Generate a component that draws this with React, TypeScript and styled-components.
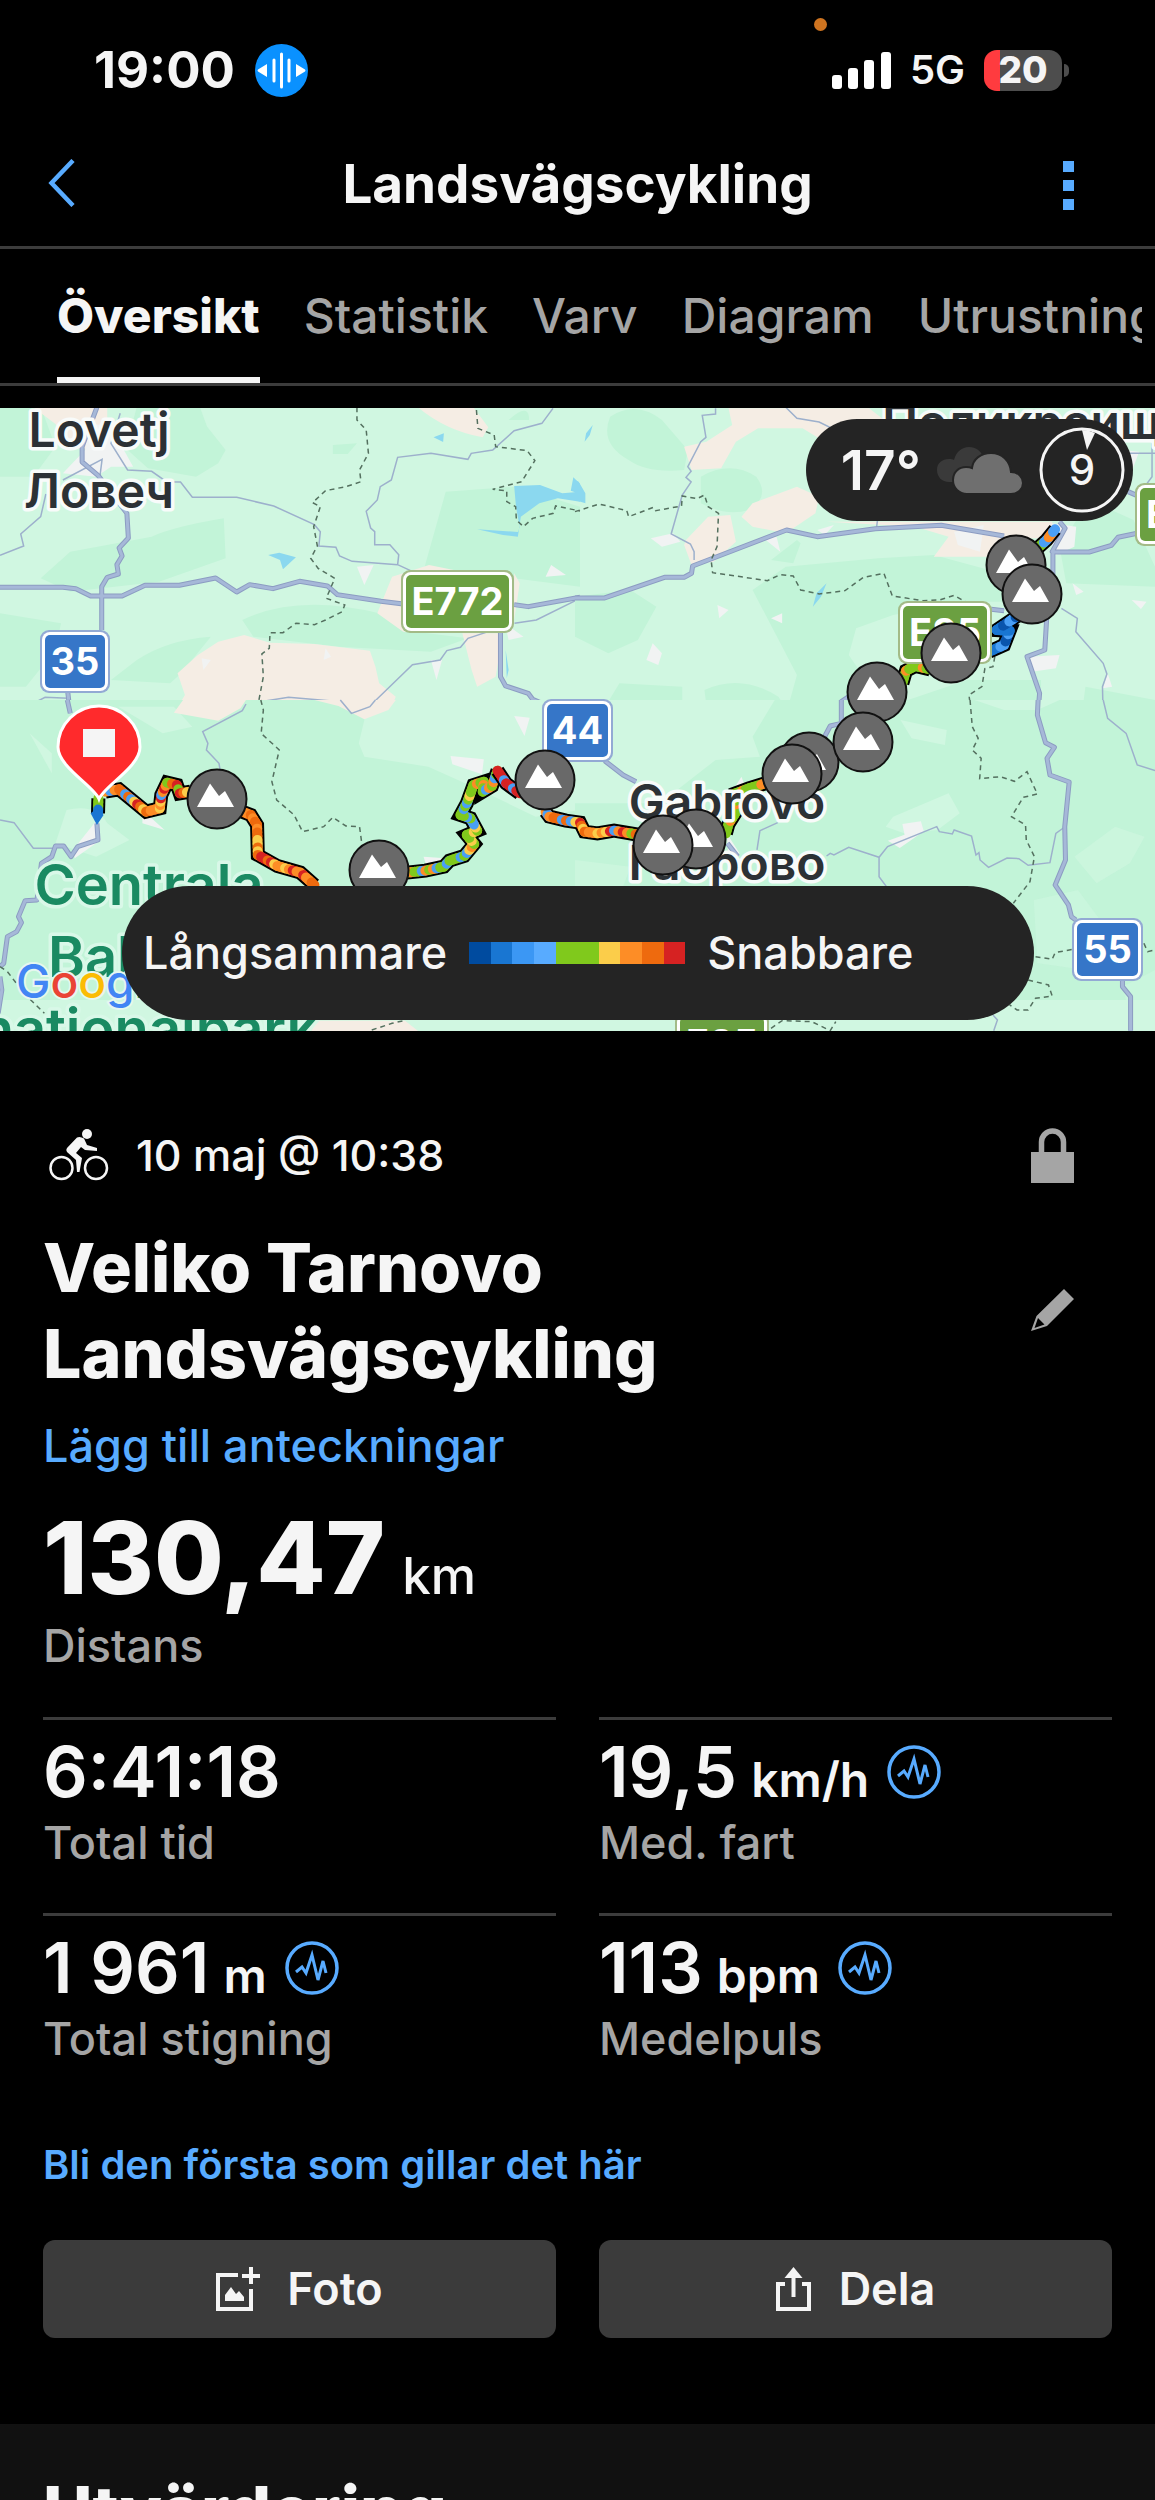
import React from "react";
import styled, { createGlobalStyle } from "styled-components";

const color = {
  bg: "#000000",
  text: "#f5f5f5",
  muted: "#a5a5a5",
  link: "#58abff",
  line: "#3c3c3c",
  button: "#3b3b3b",
  panel: "#242424",
  section: "#111111",
};

const GlobalStyle = createGlobalStyle`
  * { box-sizing: border-box; }
  body {
    margin: 0;
    background: ${color.bg};
    color: ${color.text};
    font-family: Inter, "Liberation Sans", sans-serif;
  }
  h1, h2, p, dl, dd, dt { margin: 0; font-weight: inherit; }
  button { font: inherit; color: inherit; border: 0; padding: 0; background: none; cursor: pointer; }
  a { text-decoration: none; }
  svg { display: block; flex: none; }
`;

const Screen = styled.div`
  min-height: 100vh;
  overflow: hidden;
`;

/* ---------- Status bar ---------- */

const StatusBar = styled.div`
  display: flex;
  justify-content: space-between;
  align-items: center;
  position: relative;
  height: 140px;
  padding: 0 86px 0 94px;
`;

const StatusGroup = styled.div<{ $gap: number }>`
  display: flex;
  align-items: center;
  gap: ${(p) => p.$gap}px;
`;

const Clock = styled.span`
  font-size: 51px;
  line-height: 56px;
  font-weight: 700;
`;

const Network = styled.span`
  font-size: 40px;
  line-height: 48px;
  font-weight: 600;
`;

const PrivacyDot = styled.span`
  position: absolute;
  top: 18px;
  right: 328px;
  width: 13px;
  height: 13px;
  border-radius: 50%;
  background: #cf7420;
`;

const BatteryWrap = styled.div`
  display: flex;
  align-items: center;
  gap: 2px;
`;

const BatteryBody = styled.div`
  width: 78px;
  height: 41px;
  border-radius: 13px;
  background: linear-gradient(90deg, #ff3b3f 16px, #4d4d4d 16px);
  text-align: center;
  font-size: 37px;
  line-height: 40px;
  font-weight: 800;
`;

const BatteryTip = styled.div`
  width: 5px;
  height: 13px;
  border-radius: 0 5px 5px 0;
  background: #4d4d4d;
`;

/* ---------- Header and tabs ---------- */

const Header = styled.header`
  display: grid;
  grid-template-columns: 120px 1fr 120px;
  align-items: center;
  height: 109px;
  padding-bottom: 18px;
  border-bottom: 3px solid ${color.line};
`;

const HeaderButton = styled.button<{ $end?: boolean }>`
  display: flex;
  justify-content: ${(p) => (p.$end ? "flex-end" : "flex-start")};
  padding: ${(p) => (p.$end ? "2px 81px 0 0" : "0 0 2px 46px")};
`;

const ScreenTitle = styled.h1`
  text-align: center;
  font-size: 53px;
  line-height: 64px;
  font-weight: 700;
`;

const Tabs = styled.nav`
  display: flex;
  height: 137px;
  margin-bottom: 22px;
  padding: 0 13px 0 57px;
  border-bottom: 3px solid ${color.line};
`;

const TabStrip = styled.div`
  display: flex;
  gap: 44px;
  flex: 1;
  min-width: 0;
  overflow: hidden;
`;

const Tab = styled.button<{ $active?: boolean }>`
  flex: none;
  height: 134px;
  font-size: 48px;
  line-height: 56px;
  font-weight: ${(p) => (p.$active ? 800 : 500)};
  color: ${(p) => (p.$active ? color.text : color.muted)};
  box-shadow: ${(p) => (p.$active ? `inset 0 -6px ${color.text}` : "none")};
`;

/* ---------- Map ---------- */

const MapPanel = styled.section`
  position: relative;
  height: 623px;
  overflow: hidden;
`;

const MapCanvas = styled.svg`
  width: 100%;
  height: 100%;
  font-family: Inter, "Liberation Sans", sans-serif;
`;

const Weather = styled.div`
  position: absolute;
  top: 11px;
  right: 22px;
  display: flex;
  align-items: center;
  gap: 16px;
  height: 102px;
  padding: 0 8px 0 35px;
  border-radius: 51px;
  background: ${color.panel};
`;

const Temperature = styled.span`
  font-size: 55px;
  line-height: 64px;
  font-weight: 600;
`;

const Legend = styled.div`
  position: absolute;
  left: 122px;
  right: 121px;
  bottom: 11px;
  display: flex;
  align-items: center;
  gap: 22px;
  height: 134px;
  padding: 0 21px;
  border-radius: 67px;
  background: ${color.panel};
  font-size: 45px;
  line-height: 52px;
  font-weight: 500;
`;

const Scale = styled.div`
  display: flex;
  width: 216px;
  height: 22px;
`;

const Swatch = styled.span<{ $fill: string }>`
  flex: 1;
  background: ${(p) => p.$fill};
`;

/* ---------- Activity summary ---------- */

const Summary = styled.main`
  padding: 90px 43px 86px;
`;

const MetaRow = styled.div`
  display: flex;
  align-items: center;
  gap: 27px;
  height: 68px;
  padding-left: 6px;
`;

const DateText = styled.p`
  flex: 1;
  font-size: 43px;
  line-height: 52px;
  font-weight: 500;
`;

const IconButton = styled.button`
  display: flex;
  padding: 0 38px;
`;

const TitleRow = styled.div`
  display: flex;
  align-items: center;
  justify-content: space-between;
  margin-top: 35px;
`;

const ActivityTitle = styled.h2`
  max-width: 700px;
  font-size: 68px;
  line-height: 86px;
  font-weight: 800;
`;

const TextLink = styled.a`
  display: block;
  width: fit-content;
  line-height: 56px;
  color: ${color.link};
`;

const NotesLink = styled(TextLink)`
  margin-top: 22px;
  font-size: 45px;
  font-weight: 500;
`;

const Distance = styled.div`
  display: flex;
  flex-direction: column;
  margin-top: 39px;
`;

const DistanceValue = styled.dd`
  display: flex;
  align-items: baseline;
  gap: 17px;
  font-size: 101px;
  line-height: 88px;
  font-weight: 800;
`;

const DistanceUnit = styled.span`
  font-size: 51px;
  font-weight: 500;
`;

const Label = styled.dt`
  order: 2;
  font-size: 45px;
  line-height: 52px;
  font-weight: 500;
  color: ${color.muted};
`;

const StatGrid = styled.div`
  display: grid;
  grid-template-columns: 1fr 1fr;
  column-gap: 43px;
  margin-top: 45px;
`;

const Stat = styled.div`
  display: flex;
  flex-direction: column;
  height: 196px;
  padding-top: 13px;
  border-top: 3px solid ${color.line};
`;

const StatValue = styled.dd`
  display: flex;
  align-items: center;
  gap: 18px;
  height: 78px;
  margin-bottom: 6px;
`;

const Figure = styled.span`
  font-size: 70px;
  line-height: 78px;
  font-weight: 600;
`;

const Unit = styled.span`
  margin-left: 14px;
  font-size: 48px;
  line-height: 48px;
`;

const LikeLink = styled(TextLink)`
  margin-top: 28px;
  font-size: 40px;
  font-weight: 600;
`;

const Actions = styled.div`
  display: grid;
  grid-template-columns: 1fr 1fr;
  gap: 43px;
  margin-top: 47px;
`;

const ActionButton = styled.button`
  display: flex;
  align-items: center;
  justify-content: center;
  gap: 27px;
  height: 98px;
  border-radius: 12px;
  background: ${color.button};
  font-size: 45px;
  line-height: 52px;
  font-weight: 600;
`;

const Evaluation = styled.section`
  padding: 48px 43px;
  background: ${color.section};
`;

const SectionTitle = styled.h2`
  font-size: 68px;
  line-height: 76px;
  font-weight: 800;
`;

/* ---------- Icons ---------- */

const VoiceIcon = () => (
  <svg width="53" height="53" viewBox="0 0 53 53" aria-hidden="true">
    <circle cx="26.500" cy="26.500" r="26.500" fill="#0a91ff" />
    <g stroke="#fff" strokeWidth="3" strokeLinecap="round">
      <path d="M26.500 10v33M19 16v21M34 16v21" />
    </g>
    <path d="M12 20v13l-9-5.500q-1-1 0-2zM41 20v13l9-5.500q1-1 0-2z" fill="#fff" />
  </svg>
);

const SignalIcon = () => (
  <svg width="59" height="37" viewBox="0 0 59 37" fill="#fff" aria-hidden="true">
    <rect x="0" y="23" width="10" height="14" rx="3" />
    <rect x="16" y="16" width="10" height="21" rx="3" />
    <rect x="32" y="8" width="10" height="29" rx="3" />
    <rect x="49" y="0" width="10" height="37" rx="3" />
  </svg>
);

const BackIcon = () => (
  <svg width="30" height="48" viewBox="0 0 30 48" aria-hidden="true">
    <path d="M27 1.500 5.500 24 27 46.500" fill="none" stroke={color.link} strokeWidth="4.500" />
  </svg>
);

const MoreIcon = () => (
  <svg width="11" height="49" viewBox="0 0 11 49" fill={color.link} aria-hidden="true">
    <path d="M0 0h11v11H0zM0 19h11v11H0zM0 38h11v11H0z" />
  </svg>
);

const CloudIcon = () => (
  <svg width="86" height="47" viewBox="0 0 86 47" aria-hidden="true">
    <path
      d="M12 35C5 35 0 30 0 23s5-11 12-11c2 0 4 0 5 1C19 5 25 0 32 0c8 0 13 5 15 12v23z"
      fill="#3a3a3a"
    />
    <path
      d="M30 47c-8 0-14-6-14-14s6-13 13-13c2 0 4 0 6 1C36 12 44 6 54 6c11 0 19 8 20 19 7 0 12 5 12 11s-5 11-12 11z"
      fill="#6f6f6f"
      stroke={color.panel}
      strokeWidth="2"
    />
  </svg>
);

const WindDial = () => (
  <svg width="86" height="86" viewBox="0 0 86 86" role="img" aria-label="Vind 9">
    <circle cx="43" cy="43" r="41" fill="none" stroke={color.text} strokeWidth="3" />
    <path d="M43 3q7 0 13 3l-8 17-5-20" fill={color.text} />
    <text x="43" y="58" textAnchor="middle" fontSize="42" fontWeight="500" fill={color.text}>
      9
    </text>
  </svg>
);

const CyclistIcon = () => (
  <svg width="60" height="52" viewBox="0 0 60 52" aria-hidden="true">
    <g fill="none" stroke={color.text} strokeWidth="2.500">
      <circle cx="12.500" cy="39" r="11" />
      <circle cx="47" cy="39" r="11" />
    </g>
    <circle cx="38" cy="5" r="5" fill={color.text} />
    <path
      d="M28 8.500q3-1.500 7 1l3 6.500 10 3v3l-12-1-4-3-5 6 6 5-2.500 14h-2.500l-1-12-9-8q-1.500-2 0-4z"
      fill={color.text}
    />
  </svg>
);

const LockIcon = () => (
  <svg width="43" height="55" viewBox="0 0 43 55" aria-hidden="true">
    <path d="M10.500 26V14a11 11 0 0 1 22 0v12" fill="none" stroke={color.muted} strokeWidth="5.500" />
    <path d="M0 24h43v31H0z" fill={color.muted} />
  </svg>
);

const PencilIcon = () => (
  <svg width="43" height="42" viewBox="0 0 43 42" aria-hidden="true">
    <path
      d="M33 0 43 10 16 37 0 42 5.500 27zM7 29 3.500 39 13.500 35.500z"
      fill={color.muted}
      fillRule="evenodd"
    />
  </svg>
);

const GraphIcon = () => (
  <svg width="54" height="54" viewBox="0 0 54 54" fill="none" stroke={color.link} aria-hidden="true">
    <circle cx="27" cy="27" r="25" strokeWidth="3.500" />
    <path d="m11 31 6-5 4 6 6-18 6 25 5-19 3 12" strokeWidth="3" />
  </svg>
);

const PhotoIcon = () => (
  <svg width="44" height="44" viewBox="0 0 44 44" aria-hidden="true">
    <path d="M22 8H2v34h33V22" fill="none" stroke={color.text} strokeWidth="4" />
    <path d="M35 0v17M26 9h18" stroke={color.text} strokeWidth="4" />
    <path d="M9 34v-6l6-8 5 7 3-3 5 6v4z" fill={color.text} />
  </svg>
);

const ShareIcon = () => (
  <svg width="36" height="44" viewBox="0 0 36 44" aria-hidden="true">
    <path d="M9 17H2v25h31V17h-7" fill="none" stroke={color.text} strokeWidth="4" />
    <path d="M17.500 30V6" stroke={color.text} strokeWidth="4" />
    <path d="m17.500 0 9 11h-18z" fill={color.text} />
  </svg>
);

/* ---------- Map drawing ---------- */

/* The terrain is drawn in four tiles, each in its own 1568-wide grid. */
const Tile = ({ x, y, children }: { x: number; y: number; children: React.ReactNode }) => (
  <g transform={`translate(${x} ${y}) scale(0.3699 0.3333)`}>{children}</g>
);

const water = "#8bd8ef";
const forest = "#c2f4d8";
const meadow = "#d0f7e1";
const farm = "#f5ede4";
const town = "#f1f3f3";

const Major = ({ d }: { d: string }) => (
  <g fill="none" strokeLinejoin="round">
    <path d={d} stroke="#8c9cc2" strokeWidth="5" vectorEffect="non-scaling-stroke" />
    <path d={d} stroke="#a6b8d8" strokeWidth="3" vectorEffect="non-scaling-stroke" />
  </g>
);

const Minor = ({ d }: { d: string }) => (
  <path d={d} fill="none" stroke="#9db0cc" strokeWidth="1.500" vectorEffect="non-scaling-stroke" />
);

const Border = ({ d }: { d: string }) => (
  <path
    d={d}
    fill="none"
    stroke="#54705f"
    strokeWidth="1.500"
    strokeDasharray="5 4"
    vectorEffect="non-scaling-stroke"
  />
);

const speed = {
  navy: "#0a55ad",
  blue: "#1976d2",
  sky: "#4a9ff5",
  green: "#80c91c",
  yellow: "#fbcd4a",
  orange: "#fd8d26",
  deep: "#ee6a0e",
  red: "#d62222",
};

type Point = [number, number];

const Route = ({ points, shades }: { points: Point[]; shades: string[] }) => {
  const pieces: { d: string; shade: string }[] = [];
  let n = 0;
  points.slice(1).forEach(([x2, y2], i) => {
    const [x1, y1] = points[i];
    const steps = Math.max(1, Math.round(Math.hypot(x2 - x1, y2 - y1) / 11));
    for (let s = 0; s < steps; s++) {
      const at = (t: number) => `${x1 + (x2 - x1) * t} ${y1 + (y2 - y1) * t}`;
      const shade = shades[(n * 7 + ((n * n) % 5)) % shades.length];
      pieces.push({ d: `M${at(s / steps)}L${at((s + 1) / steps)}`, shade });
      n++;
    }
  });
  return (
    <g fill="none">
      <polyline
        points={points.map((p) => p.join(",")).join(" ")}
        stroke="#000"
        strokeWidth="14"
        strokeLinejoin="miter"
        vectorEffect="non-scaling-stroke"
      />
      {pieces.map((p, i) => (
        <path key={i} d={p.d} stroke={p.shade} strokeWidth="10" strokeLinecap="round" vectorEffect="non-scaling-stroke" />
      ))}
    </g>
  );
};

const warm = [speed.deep, speed.orange, speed.orange, speed.red, speed.yellow, speed.deep];
const mixed = [speed.orange, speed.red, speed.deep, speed.green, speed.red, speed.orange, speed.yellow, speed.deep, speed.sky];
const cool = [speed.green, speed.green, speed.sky, speed.green, speed.yellow, speed.green, speed.sky, speed.green, speed.orange];
const greens = [speed.green, speed.green, speed.yellow, speed.green, speed.orange];
const blues = [speed.blue, speed.sky, speed.blue, speed.navy];

const climbs: Point[] = [
  [217, 799], [379, 870], [545, 780], [696, 839], [663, 845], [809, 762],
  [792, 774], [877, 692], [863, 742], [951, 653], [1016, 565], [1032, 594],
];

const Climb = ({ at }: { at: Point }) => (
  <g transform={`translate(${at[0]} ${at[1]})`}>
    <circle r="29.500" fill="#696969" stroke="#111" strokeWidth="2" />
    <path d="M-20 8-7-15.500 2-3 8-8 17 8z" fill="#fff" />
  </g>
);

const shields = [
  { x: 401, y: 570, w: 113, text: "E772", euro: true },
  { x: 898, y: 601, w: 94, text: "E85", euro: true },
  { x: 1135, y: 483, w: 94, text: "E85", euro: true },
  { x: 675, y: 1012, w: 94, text: "E85", euro: true },
  { x: 40, y: 630, w: 70, text: "35", euro: false },
  { x: 542, y: 699, w: 71, text: "44", euro: false },
  { x: 1072, y: 918, w: 71, text: "55", euro: false },
];

const Shield = ({ x, y, w, text, euro }: (typeof shields)[number]) => (
  <g transform={`translate(${x} ${y})`}>
    <rect width={w} height="63" rx="9" fill={euro ? "#a3bb87" : "#93aad4"} />
    <rect x="2" y="2" width={w - 4} height="59" rx="8" fill="#fff" />
    <rect x="5" y="5" width={w - 10} height="53" rx="5" fill={euro ? "#6ba041" : "#3676c8"} />
    <text x={w / 2} y="45" textAnchor="middle" fontSize="38" fontWeight="700" fill="#fff">
      {text}
    </text>
  </g>
);

const places = [
  { x: 99, y: 447, text: "Lovetj", park: false },
  { x: 99, y: 508, text: "Ловеч", park: false },
  { x: 727, y: 819, text: "Gabrovo", park: false },
  { x: 727, y: 880, text: "Габрово", park: false },
  { x: 1036, y: 439, text: "Поликраище", park: false },
  { x: 149, y: 905, text: "Centrala", park: true },
  { x: 139, y: 977, text: "Balkan", park: true },
  { x: 149, y: 1049, text: "nationalpark", park: true },
];

const Place = ({ x, y, text, park }: (typeof places)[number]) => (
  <text
    x={x}
    y={y}
    textAnchor="middle"
    fontSize={park ? 56 : 48}
    fontWeight="600"
    fill={park ? "#1a8a62" : "#2c3135"}
    stroke={park ? "#d9f8e8" : "#f8fbfa"}
    strokeWidth="7"
    strokeLinejoin="round"
    paintOrder="stroke"
  >
    {text}
  </text>
);

const RouteMap = () => (
  <MapCanvas viewBox="0 408 1155 623" preserveAspectRatio="xMidYMid slice" role="img" aria-label="Karta över rutten">
    <rect x="0" y="407" width="1155" height="624" fill={meadow} />

    <Tile x={0} y={400}>
      <g fill={forest}>
        <path d="M0 20h110l40 120-60 90H0zM370 20h170l20 60 50 70-20 40-60 40-130-25-60-60z" />
        <path d="M900 135l65-5-25 32h-40zM1375 60q50-50 55-10v10zM1205 275l190-15 173 60v240l-420-60z" />
        <path d="M410 410q60-30 195-55l5 120-180 70-240 30-80-40 80-80z" />
        <path d="M655 660q150-80 370-20l60 50 180 25-100 40-250-15-230-30zM0 640l165 30-15 80-80 110H0zM370 780q80-60 200-70l-80 110-30 30-160-10zM0 960v-25l120 0 480 25z" />
      </g>
      <g fill={farm}>
        <path d="M90 22h200v60l-20 70-80-10-40-70zM1130 22h150l40 60-15 30q-100-20-175-90z" />
        <path d="M535 765 590 725 660 705 730 728 850 732 1000 752 1015 800 1025 850 1070 890 1055 930 985 962H600L470 940 500 885 480 820z" />
        <path d="M1060 530l100-35 90 20v180l-160 0-70-55zM1250 700h110l-20 130-50 30-15-50zM1390 520l15 30-15 110z" />
      </g>
      <path d="M600 962 700 920 840 902 930 930 960 962z" fill={forest} />
      <g fill={town}>
        <path d="M240 70l60 10 60 120h-60l-40 30-90-10 60-70zM965 500l45-5-25 60zM1490 495l40 30-55 5zM1165 780h30l-15 60zM545 775l25 5-20 30zM880 745l15 25-20 10zM1365 670l50 40-40 10z" />
      </g>
      <g fill={water}>
        <path d="M1390 258l70-3 60 25 48-5v30l-60-10-50 15-50 40-8 60-40-5-70-17 110 8 5-15-10-60zM1550 232l18 20v30l-25-10zM725 465l30-7 45 14-35 36-8-28zM1172 112l28-12-2 26zM1367 750l8 60-5 25z" />
      </g>
      <Minor d="M0 466 64 438 56 402 110 350 124 282M170 240 276 178 270 230M325 40 300 130 345 210 410 214 450 245 488 246 520 292 640 292 740 318 850 374 866 395 862 438 908 442 918 468 952 484 1075 494 1110 512M1495 25 1465 70 1390 92 1332 150 1274 160 1265 178 1165 160 1075 172 1058 240 1028 260 1020 300 990 334 1002 384 1013 395 1013 434 1054 434 1078 464 1075 494M1391 670 1450 660 1568 595M1320 695 1265 715 1245 742 1208 752 1190 780 1115 794 1000 918 950 940 920 905 780 892 665 912 655 930 605 960M0 905 72 920 122 892 185 895" />
      <Major d="M262 22 222 140 222 186 265 226 343 340 347 414 322 444 330 468 316 494 320 522 290 532 275 560 275 690M0 562 170 562 205 566 245 588 330 588 392 556 485 556 583 534 640 576 675 554 738 566 810 544 885 558 912 584 1030 604 1090 612M1390 614 1428 620 1568 592M1353 695 1353 830 1367 858 1428 880 1440 898 1470 912M183 875 190 940" />
      <Border d="M965 22 965 60 990 90 996 160 972 210 976 245 935 260 880 272 845 308 866 320 848 380 858 438 840 475 860 505 905 535 882 595 932 615 925 635 880 660 850 674 800 670 765 698 730 698 728 745 708 762 712 830 700 900 712 960M1288 30 1292 85 1336 105 1340 140 1425 152 1446 182 1410 245 1332 268 1370 272 1370 305 1394 320 1396 360 1415 380 1440 355 1496 340 1502 318 1568 333" />
    </Tile>

    <Tile x={575} y={400}>
      <g fill={forest}>
        <path d="M95 50q70-50 140 10l70 90-10 60q-100 10-150-30-80-50-50-130zM340 230q80-50 150 0 40 60-20 100-60 20-130-20zM530 480l70-60 10 10-20 60z" />
        <path d="M480 570l90-70 250-25 150-10 200 60-10 80h-100l-200 40-100 40-20 80 50 80-70 220H540l60-240zM0 590l150-20 70 50-50 100-80 40-90-50zM120 850l170 10v100H60zM350 870q100-50 200 20l40 70H360z" />
        <path d="M1310 440l80-140 120 60 58 140v60l-240-10zM900 900l160-60 200 0v120H900zM1380 860l188 40v60h-200z" />
      </g>
      <g fill={farm}>
        <path d="M415 25h380l70 60-190 40-60-40-120 0-60 40-40 80-80 5-20-70 60-15 70-50zM480 310l120-50 60 30-10 50-80 60-90-20-30-30zM300 420l60-70 60-5 15 80-60 60-60 10-20-60zM680 365h330l280 0v50l-110 0-40 55H970l40-60-90-30z" />
      </g>
      <g fill={town}>
        <path d="M205 415l60-15 20 25-50 15zM510 415l35-5 10 45zM655 390l45-15-25 30zM1025 395l80-20-10 80-60-20zM1290 370l65 10-5 60-60 30zM385 615l30 15-25 25zM530 655l30-15v30zM210 730l25 30-10 35-32-15zM1225 770l85-5-10 40-65 10zM1345 550l30 25-20 10zM1505 600l40 5-15 22zM1440 820l12 40-25 5zM1480 150l45 5-20 60z" />
      </g>
      <g fill={water}>
        <path d="M0 240l10 5 18 35v30L0 300zM48 75l-8 30-14 20 4-25zM680 550l-15 40-22 30 10-40z" />
      </g>
      <Minor d="M380 25V42L344 46 354 112 340 125 305 200 314 214 300 232 314 246 290 285 260 402 312 432 322 455 322 480M570 22 600 55 660 66 740 110M820 340 815 385M1315 625 1358 655 1354 695 1428 790 1438 822 1426 860 1428 960M1560 130V230L1540 260M1490 160H1568" />
      <Major d="M0 594 80 594 242 532 295 532 315 520 318 498 572 390 655 410 812 386 990 376 1160 408M1310 365 1325 385 1290 455 1390 456 1450 436 1468 412 1520 400M1292 460V620L1276 640 1270 750 1222 770 1256 880 1250 960M1125 628 1160 632M740 890 720 905 720 960M1495 275 1520 287" />
      <Border d="M0 335 65 312 140 332 145 350 212 322 218 332 288 318 290 288 330 296 350 285 360 320 388 340 384 440 368 480 372 518 520 542 555 524 590 528 610 570 660 582 730 572 780 532 835 520 858 588 940 602 985 600 1025 586 1055 605M1135 770 1130 800 1108 806 1100 860 1065 885 1074 960" />
    </Tile>

    <Tile x={0} y={700}>
      <path d="M0 0h1568v900H0z" fill={forest} />
      <g fill={meadow}>
        <path d="M985 60 1000 0H1568V330L1448 350 1298 270 1158 200 985 170 970 130z" />
        <path d="M180 330q80-20 110 40l60 50-90 50-110-40z" />
        <path d="M320 20h150l50 60-80 20zM80 100l60 60 0 60z" />
      </g>
      <path d="M495 0h170l-15 25-60 37-120-24zM850 0h220l-20 30-65 28-70-40z" fill={farm} />
      <g fill={town}>
        <path d="M1390 48l42 5-14 55zM1218 168l90 10-5 45-80-30zM385 330l60 60-60-20zM262 360l10 60-70 55-5-25zM1145 470l60 5-50 30z" />
      </g>
      <path d="M855 962h240l40 35H840z" fill={farm} />
      <Minor d="M665 12 655 32 548 95 562 130 558 150 592 190 595 210M0 360 38 368 90 445 150 445M920 0 950 40 1000 20 1015 0" />
      <Major d="M182 0 190 40M262 370 265 420 210 440 192 470 172 438 150 438 140 470 112 490 100 600 68 602 50 650 58 668 45 695 20 710 10 790 0 800M0 830 5 870-5 940" />
      <Border d="M705 0 712 30 706 100 755 150 735 245 748 300 795 345 818 395 875 380 900 352 935 378 972 380 978 430M0 800 20 815 65 880 120 940M1005 990 1060 970 1092 962" />
    </Tile>

    <Tile x={575} y={700}>
      <path d="M0 0h1568v900H0z" fill={forest} />
      <g fill={meadow}>
        <path d="M0 0h540l-60 110 20 60-120 10-150 130L0 310zM880 60l125 30-5 45-90-20zM1080 0h230l-60 30-90 0zM860 350l150-70 30 60-60 50-90 10-50-20z" />
        <path d="M1350 470l110-90 80 30-40 80-90 60zM0 480l150 20-20 60H0z" opacity=".6" />
        <path d="M1240 600l120-30 80 120-60 120-130-20zM1480 860l88-50v170h-60z" opacity=".5" />
      </g>
      <g fill={town}>
        <path d="M885 372l50-8 8 30-65 50-32-22 45-18zM450 230l20 60-60 40 0-30zM410 400l35 60-30 10z" />
      </g>
      <Minor d="M548 368 500 392 492 450M680 468 690 460 700 465 740 442 822 472 845 440 978 380 985 395 1020 402 1025 390 1072 408 1084 465 1092 458 1095 480 1118 502 1168 474 1200 476 1225 496 1284 488 1300 400 1320 384M822 472V530L842 560M1428 0 1440 55 1490 100 1520 195 1568 212M1130 945 1142 960 1132 992" />
      <Major d="M720 0V70L690 78 670 120M80 182 130 225 165 245M412 430 440 470M1252 0 1250 45 1272 128 1296 142 1276 175 1284 225 1336 246 1324 380 1326 480 1298 555 1334 615 1342 650 1354 660M1480 840V860L1502 890V992" />
      <Border d="M1068 0 1074 80 1090 115 1074 150 1098 175 1094 236 1150 230 1188 244 1222 215 1250 282 1212 292 1180 350 1218 375 1220 420 1242 470 1230 545 1185 610M1245 770 1290 778 1298 758 1345 748M1538 730 1548 755 1568 750M1225 840 1280 855 1290 888 1245 895 1225 930 1195 930 1175 915M530 985 560 962 640 965 690 992 705 965" />
    </Tile>

    <Tile x={0} y={700}>
      <Route points={[[266, 295], [265, 340]]} shades={[speed.green, speed.blue]} />
      <path d="M245 340 262 325 280 345 262 375z" fill={speed.blue} />
      <Route
        points={[[285, 275], [322, 268], [395, 335], [432, 325], [436, 285], [452, 248], [478, 255], [486, 280], [515, 275]]}
        shades={mixed}
      />
      <Route points={[[655, 335], [678, 345], [695, 375], [697, 465], [750, 498], [812, 518], [850, 555]]} shades={warm} />
      <Route
        points={[
          [1100, 518], [1150, 512], [1200, 500], [1215, 482], [1255, 468], [1282, 432], [1262, 405], [1290, 392],
          [1272, 355], [1245, 345], [1262, 310], [1280, 255], [1308, 245], [1305, 275], [1330, 258], [1345, 212],
        ]}
        shades={cool}
      />
      <Route points={[[1345, 212], [1368, 250], [1405, 280]]} shades={[speed.red, speed.sky, speed.red]} />
      <Route
        points={[[1475, 335], [1485, 350], [1530, 362], [1568, 368], [1580, 395], [1615, 400], [1660, 392], [1730, 405]]}
        shades={mixed}
      />
    </Tile>
    <Tile x={575} y={700}>
      <Route points={[[408, 400], [415, 372], [436, 335], [434, 280], [470, 265], [515, 250]]} shades={greens} />
    </Tile>
    <Tile x={575} y={400}>
      <Route points={[[885, 850], [895, 812], [920, 798], [960, 808]]} shades={greens} />
      <Route points={[[1120, 755], [1160, 735], [1175, 692], [1140, 690], [1200, 645]]} shades={blues} />
      <Route points={[[1245, 450], [1275, 420], [1298, 388]]} shades={[speed.green, speed.sky, speed.green, speed.orange]} />
    </Tile>

    {places.map((p) => (
      <Place key={p.text} {...p} />
    ))}
    {shields.map((s) => (
      <Shield key={`${s.x}-${s.text}`} {...s} />
    ))}
    {climbs.map((c) => (
      <Climb key={c.join()} at={c} />
    ))}

    <path
      d="M99 799C94 786 58 767 58 747a41 41 0 0 1 82 0c0 20-36 39-41 52z"
      fill="#ff2a2c"
      stroke="#fff"
      strokeWidth="3"
    />
    <path d="M83 729h32v28H83z" fill="#f5f5f5" />

    <text x="16" y="998" fontSize="46" fontWeight="500" stroke="#e6f7ef" strokeWidth="4" paintOrder="stroke">
      <tspan fill="#4285f4">G</tspan>
      <tspan fill="#ea4335">o</tspan>
      <tspan fill="#fbbc05">o</tspan>
      <tspan fill="#4285f4">g</tspan>
      <tspan fill="#34a853">l</tspan>
      <tspan fill="#ea4335">e</tspan>
    </text>
  </MapCanvas>
);

/* ---------- Page ---------- */

const legendShades = [
  "#004b9f", "#1976d2", "#3b97f4", "#58abff", "#80c91c", "#80c91c", "#fbcd4a", "#fd8d26", "#ee6a0e", "#d62222",
];

const stats = [
  { value: "6:41:18", label: "Total tid" },
  { value: "19,5", unit: "km/h", label: "Med. fart", graph: true },
  { value: "1 961", unit: "m", label: "Total stigning", graph: true },
  { value: "113", unit: "bpm", label: "Medelpuls", graph: true },
];

export default function App() {
  return (
    <Screen>
      <GlobalStyle />
      <StatusBar>
        <StatusGroup $gap={20}>
          <Clock>19:00</Clock>
          <VoiceIcon />
        </StatusGroup>
        <PrivacyDot />
        <StatusGroup $gap={19}>
          <SignalIcon />
          <Network>5G</Network>
          <BatteryWrap>
            <BatteryBody>20</BatteryBody>
            <BatteryTip />
          </BatteryWrap>
        </StatusGroup>
      </StatusBar>

      <Header>
        <HeaderButton aria-label="Tillbaka">
          <BackIcon />
        </HeaderButton>
        <ScreenTitle>Landsvägscykling</ScreenTitle>
        <HeaderButton $end aria-label="Mer">
          <MoreIcon />
        </HeaderButton>
      </Header>

      <Tabs>
        <TabStrip>
          <Tab $active>Översikt</Tab>
          <Tab>Statistik</Tab>
          <Tab>Varv</Tab>
          <Tab>Diagram</Tab>
          <Tab>Utrustning</Tab>
        </TabStrip>
      </Tabs>

      <MapPanel>
        <RouteMap />
        <Weather>
          <Temperature>17°</Temperature>
          <CloudIcon />
          <WindDial />
        </Weather>
        <Legend>
          <span>Långsammare</span>
          <Scale>
            {legendShades.map((s, i) => (
              <Swatch key={i} $fill={s} />
            ))}
          </Scale>
          <span>Snabbare</span>
        </Legend>
      </MapPanel>

      <Summary>
        <MetaRow>
          <CyclistIcon />
          <DateText>10 maj @ 10:38</DateText>
          <IconButton aria-label="Sekretess">
            <LockIcon />
          </IconButton>
        </MetaRow>
        <TitleRow>
          <ActivityTitle>Veliko Tarnovo Landsvägscykling</ActivityTitle>
          <IconButton aria-label="Redigera">
            <PencilIcon />
          </IconButton>
        </TitleRow>
        <NotesLink href="#notes">Lägg till anteckningar</NotesLink>

        <dl>
          <Distance>
            <Label>Distans</Label>
            <DistanceValue>
              130,47<DistanceUnit>km</DistanceUnit>
            </DistanceValue>
          </Distance>
          <StatGrid>
            {stats.map((s) => (
              <Stat key={s.label}>
                <Label>{s.label}</Label>
                <StatValue>
                  <Figure>
                    {s.value}
                    {s.unit && <Unit>{s.unit}</Unit>}
                  </Figure>
                  {s.graph && <GraphIcon />}
                </StatValue>
              </Stat>
            ))}
          </StatGrid>
        </dl>

        <LikeLink href="#like">Bli den första som gillar det här</LikeLink>
        <Actions>
          <ActionButton>
            <PhotoIcon />
            Foto
          </ActionButton>
          <ActionButton>
            <ShareIcon />
            Dela
          </ActionButton>
        </Actions>
      </Summary>

      <Evaluation>
        <SectionTitle>Utvärdering</SectionTitle>
      </Evaluation>
    </Screen>
  );
}
